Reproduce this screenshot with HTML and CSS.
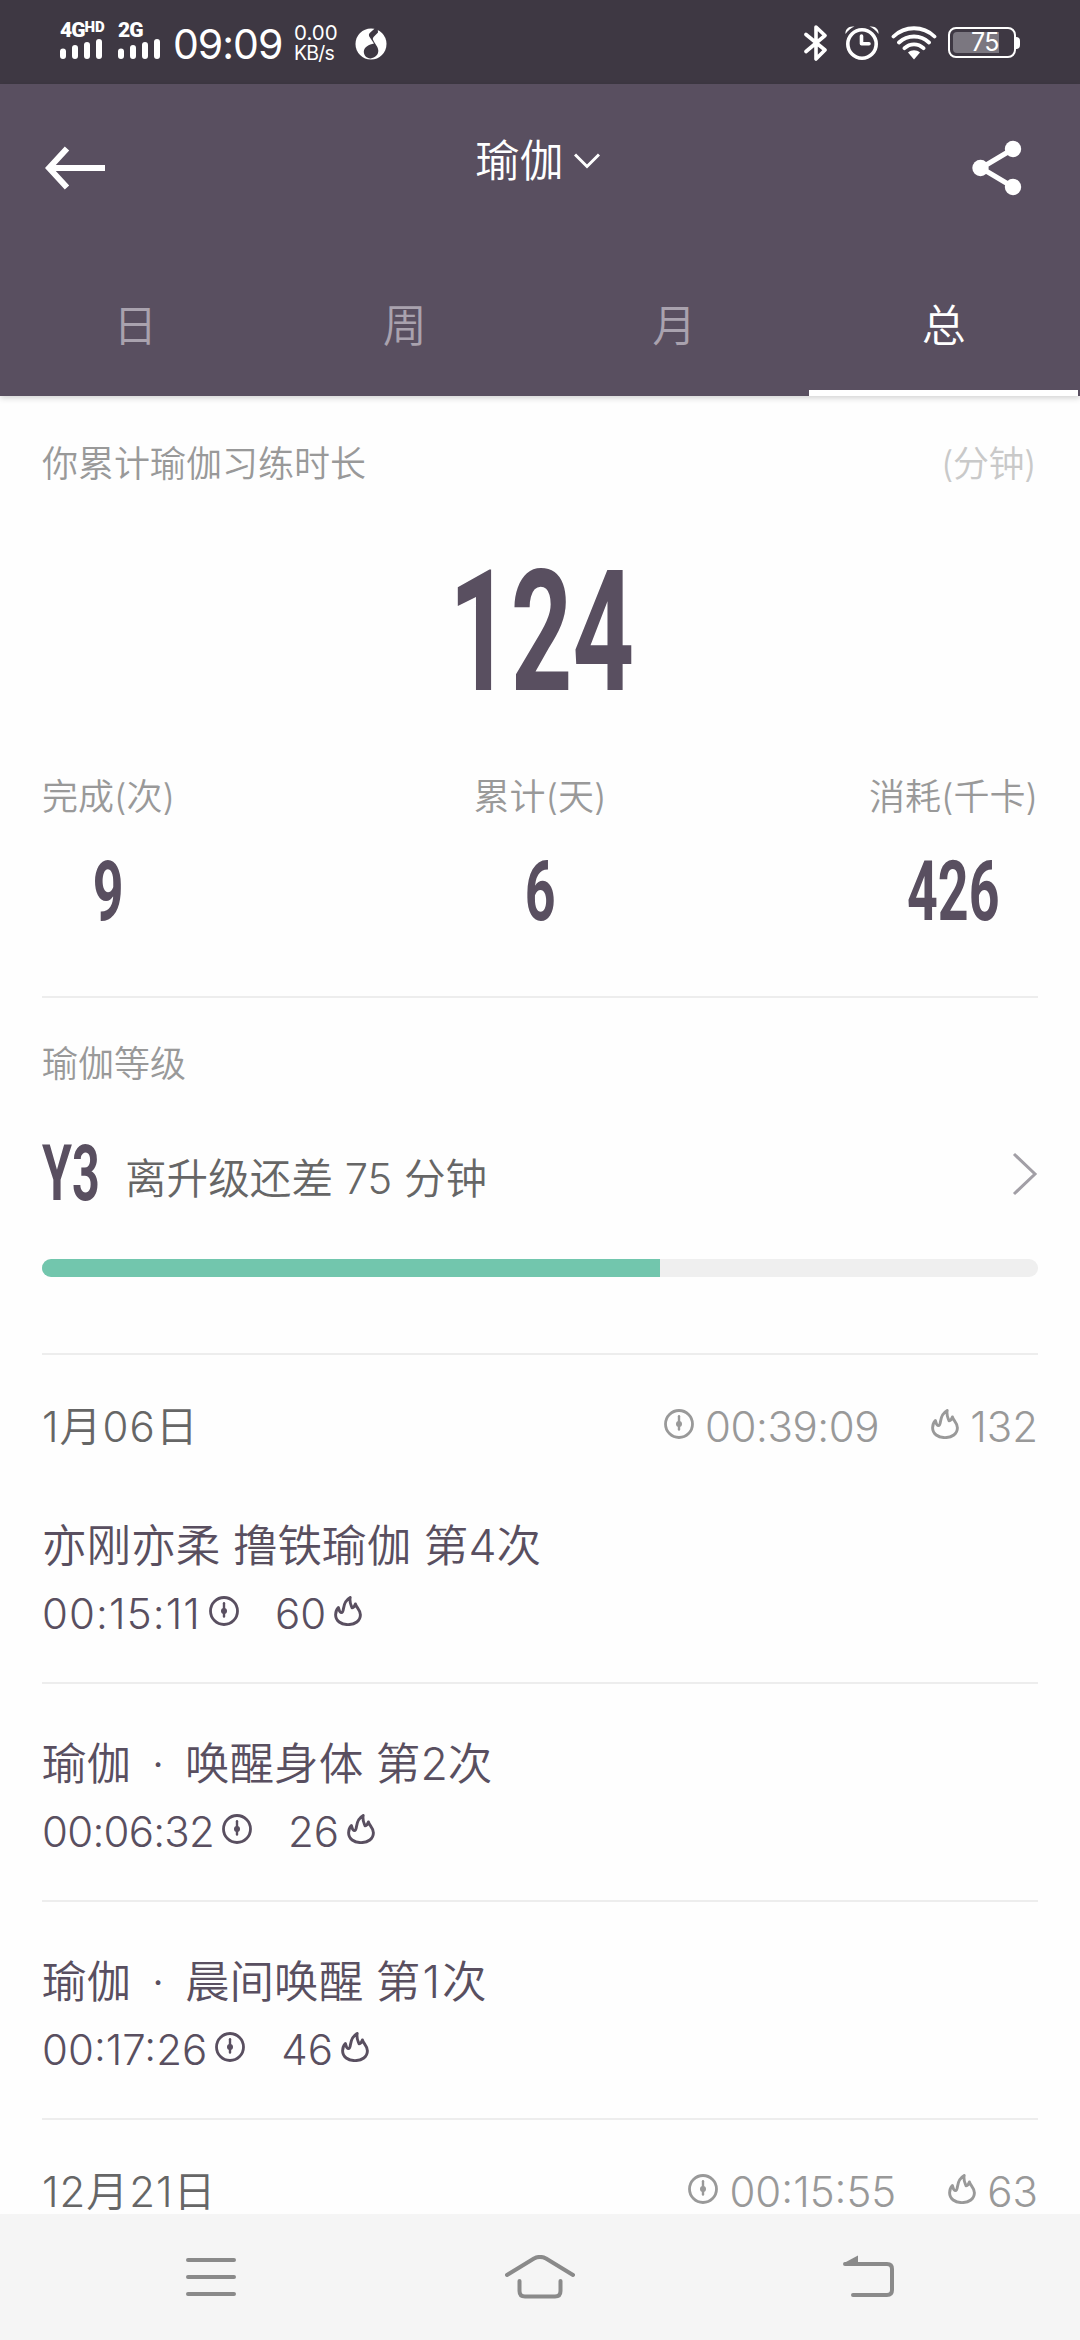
FILE: index.html
```html
<!DOCTYPE html>
<html lang="zh-CN">
<head>
<meta charset="utf-8">
<title>瑜伽</title>
<link rel="stylesheet" href="styles.css">
</head>
<body>
<svg class="defs" width="0" height="0">
  <symbol id="clock" viewBox="0 0 30 30"><circle cx="15" cy="15" r="13.500" fill="none" stroke="currentColor" stroke-width="2.800"/><path d="M15 7.200V20.500" fill="none" stroke="currentColor" stroke-width="2.400" stroke-linecap="round"/><circle cx="15" cy="15" r="3" fill="currentColor"/></symbol>
  <symbol id="flame" viewBox="0 0 28 30"><path d="M4.400 11.500C5.200 13.800 5.200 16.600 7.400 16.600C11.200 16.400 6.800 6.600 16.200 1.500C15.200 6 16.800 8.600 18 11.800C19.800 11.400 20.800 10 21.400 8C22.400 11.600 26.400 13.600 26.400 18.800C26.400 25 21 28.600 14 28.600C7 28.600 1.600 25 1.600 18.800C1.600 16 2.600 13.400 4.400 11.500Z" fill="none" stroke="currentColor" stroke-width="2.900" stroke-linejoin="round"/></symbol>
</svg>
<div class="statusbar">
  <div class="sim"><div class="net">4G<sup>HD</sup></div><svg width="44" height="20" viewBox="0 0 44 20"><path d="M3 12.500V17M15 9V17M27 6V17M39 3V17" class="bars"/></svg></div>
  <div class="sim"><div class="net">2G</div><svg width="44" height="20" viewBox="0 0 44 20"><path d="M3 12.500V17M15 9V17M27 6V17M39 3V17" class="bars"/></svg></div>
  <div class="time">09:09</div>
  <div class="speed"><span>0.00</span><span class="kb">KB/s</span></div>
  <svg class="app" width="32" height="34" viewBox="0 0 32 34"><circle cx="16" cy="18" r="15.500" fill="#fff"/><path d="M22.500 0L15 6.800C13.600 8.200 13.600 9.600 14.600 11L19 17.600C14 18.600 9 21 8.800 25.600C8.800 30 12 32.600 15.600 32.400C20 32 23.600 28.800 23.300 24.600C23.200 21 20.400 18.600 18.400 14.600C17.600 13 17.600 12 18.800 10.800L23 6.400Z" fill="#3e3843"/></svg>
  <div class="sysicons">
    <svg class="bt" width="24" height="36" viewBox="0 0 24 36"><path d="M2 9.500L21 25L12 34V2L21 10.500L2 26.500" fill="none" stroke="#fff" stroke-width="3.600" stroke-linejoin="round" stroke-linecap="round"/></svg>
    <svg width="34" height="36" viewBox="0 0 34 36"><circle cx="17" cy="19" r="14.200" fill="none" stroke="#fff" stroke-width="3.600"/><path d="M16.500 11V18.800H24" fill="none" stroke="#fff" stroke-width="3.600" stroke-linecap="round" stroke-linejoin="round"/><path d="M.5 9C0 4 4 .5 9.500 1.600C6 3 3 5.500 .5 9ZM33.500 9C34 4 30 .5 24.500 1.600C28 3 31 5.500 33.500 9Z" fill="#fff"/></svg>
    <svg class="wifi" width="46" height="36" viewBox="0 0 46 36"><path d="M2.500 11.500C14 .5 32 .5 43.500 11.500M8 17.500C16.500 9.500 29.500 9.500 38 17.500M13.500 23.200C19 18 27 18 32.500 23.200" fill="none" stroke="#fff" stroke-width="3.800" stroke-linecap="round"/><path d="M17 27.500C20.500 24.500 25.500 24.500 29 27.500L23 34.500Z" fill="#fff"/></svg>
    <div class="battery"><div class="level">75</div></div>
  </div>
</div>
<header class="header">
  <div class="titlebar">
    <svg width="60" height="44" viewBox="0 0 60 44"><path d="M60 22H5M22 2.500L4 22L22 41.500" fill="none" stroke="#fff" stroke-width="6"/></svg>
    <div class="title">瑜伽<svg width="26" height="16" viewBox="0 0 26 16"><path d="M1 1.500L13 13.500L25 1.500" fill="none" stroke="#fff" stroke-width="3"/></svg></div>
    <svg width="50" height="56" viewBox="0 0 50 56"><path d="M41 9L9 28L41 47" fill="none" stroke="#fff" stroke-width="5"/><g fill="#fff"><circle cx="41" cy="9" r="8.200"/><circle cx="8.500" cy="28" r="8.200"/><circle cx="41" cy="47" r="8.200"/></g></svg>
  </div>
  <nav class="tabs"><div>日</div><div>周</div><div>月</div><div class="on">总</div></nav>
</header>
<main class="content">
  <section class="total">
    <div class="cap"><span>你累计瑜伽习练时长</span><span class="unit">(分钟)</span></div>
    <div class="big"><span>124</span></div>
    <div class="stats">
      <div><span>完成(次)</span><b>9</b></div>
      <div><span>累计(天)</span><b>6</b></div>
      <div><span>消耗(千卡)</span><b>426</b></div>
    </div>
  </section>
  <section class="level-box">
    <div class="cap">瑜伽等级</div>
    <div class="rank"><b>Y3</b><span>离升级还差 75 分钟</span><svg width="26" height="44" viewBox="0 0 26 44"><path d="M2 2L23 22L2 42" fill="none" stroke="#a29fa6" stroke-width="3"/></svg></div>
    <div class="progress"><div style="width:62.050%"></div></div>
  </section>
  <section class="day">
    <div class="dayhead"><span>1月06日</span><div><svg width="30" height="30"><use href="#clock"/></svg><i class="t snug">00:39:09</i><svg width="28" height="30"><use href="#flame"/></svg><i>132</i></div></div>
    <article><h3>亦刚亦柔 撸铁瑜伽 第4次</h3><p><i class="loose">00:15:11</i><svg width="30" height="30"><use href="#clock"/></svg><i class="kcal">60</i><svg width="28" height="30"><use href="#flame"/></svg></p></article>
    <article><h3>瑜伽<i class="dot"> · </i>唤醒身体 第2次</h3><p><i class="tight">00:06:32</i><svg width="30" height="30"><use href="#clock"/></svg><i class="kcal">26</i><svg width="28" height="30"><use href="#flame"/></svg></p></article>
    <article><h3>瑜伽<i class="dot"> · </i>晨间唤醒 第<i class="one">1</i>次</h3><p><i>00:17:26</i><svg width="30" height="30"><use href="#clock"/></svg><i class="kcal">46</i><svg width="28" height="30"><use href="#flame"/></svg></p></article>
  </section>
  <section class="day">
    <div class="dayhead"><span>12月21日</span><div><svg width="30" height="30"><use href="#clock"/></svg><i class="t">00:15:55</i><svg width="28" height="30"><use href="#flame"/></svg><i>63</i></div></div>
  </section>
</main>
<footer class="sysnav">
  <svg width="50" height="44" viewBox="0 0 50 44"><path d="M2 5H48M2 22H48M2 39H48"/></svg>
  <svg width="70" height="44" viewBox="0 0 70 44"><path d="M2 20L29 3.500Q35 .3 41 3.500L68 20M14.500 26V36Q14.500 41.500 20 41.500H50Q55.500 41.500 55.500 36V26"/></svg>
  <svg width="52" height="44" viewBox="0 0 52 44"><path d="M2 9H44Q49 9 49 14V35Q49 40 44 40H10"/><path d="M1 8L15 .5V10H2Z" class="tip"/></svg>
</footer>
</body>
</html>
```
FILE: styles.css
```css
* { box-sizing: border-box; margin: 0; padding: 0; }
body {
  width: 1080px; height: 2340px; overflow: hidden;
  display: flex; flex-direction: column;
  background: #fefefe; color: #594f60;
  font-family: Inter, "Noto Sans CJK SC", sans-serif; font-weight: 350;
}
.defs { position: absolute; }
svg { display: block; flex: none; }
i { font-style: normal; }

.statusbar { height: 84px; flex: none; background: #3e3843; color: #fff; display: flex; align-items: flex-start; padding: 0 60px; }
.sim { width: 58px; padding-top: 21px; }
.net { height: 18px; font: 900 21px/18px Roboto, sans-serif; letter-spacing: -1px; white-space: nowrap; display: flex; }
.net sup { font-size: 15px; line-height: 12px; letter-spacing: 0; }
.bars { stroke: #fff; stroke-width: 6; stroke-linecap: round; fill: none; }
.time { margin: 19px 3px 0 -3px; width: 118px; font-size: 41px; line-height: 50px; font-weight: 400; letter-spacing: -1px; }
.speed { width: 61px; margin-top: 23px; font-size: 20.500px; line-height: 20px; font-weight: 400; display: flex; flex-direction: column; }
.kb { font-size: 19.500px; letter-spacing: -.8px; }
.app { margin-top: 26px; }
.sysicons { margin-left: auto; margin-top: 25px; display: flex; align-items: flex-start; }
.sysicons svg { margin-right: 12px; }
.sysicons .bt { margin-right: 17px; }
.sysicons .wifi { margin-right: 11px; }
.battery { width: 68px; height: 31px; margin: 2px 4px 0 0; border: 2px solid #fff; border-radius: 8px; padding: 3px; position: relative; }
.battery::after { content: ""; position: absolute; right: -6px; top: 8px; width: 4px; height: 12px; background: #fff; border-radius: 0 4px 4px 0; }
.level { width: 46px; height: 21px; background: #7b7780; border-radius: 4px 0 0 4px; font: 400 25px/21px Inter, sans-serif; letter-spacing: -.5px; text-align: right; }

.header { height: 312px; flex: none; background: #594f60; color: #fff; display: flex; flex-direction: column; justify-content: space-between; box-shadow: 0 2px 6px rgba(0,0,0,.18); z-index: 1; }
.titlebar { height: 168px; padding: 0 58px 0 45px; display: flex; justify-content: space-between; align-items: center; }
.title { display: flex; align-items: center; font-size: 44px; line-height: 60px; gap: 10px; padding-bottom: 14px; margin-left: -2px; }
.tabs { display: grid; grid-template-columns: repeat(4, 269.500px); font-size: 44px; line-height: 60px; text-align: center; height: 100px; }
.tabs div { color: #a9a2ae; height: 100px; padding-left: 1px; }
.tabs .on { color: #fff; border-bottom: 6px solid #fff; }

.content { flex: 1; min-height: 0; overflow: hidden; padding: 0 42px; }
.total { height: 602px; border-bottom: 2px solid #ededed; padding-top: 44px; }
.cap { display: flex; justify-content: space-between; font-size: 36px; line-height: 48px; color: #999; }
.unit { color: #c9c9c9; padding-right: 2px; letter-spacing: -.5px; }
.big { height: 168px; margin-top: 61px; padding-left: 4px; display: flex; justify-content: center; font: 700 168px/168px Roboto, sans-serif; }
.big span { transform: scaleX(.64); }
.stats { display: grid; grid-template-columns: 1fr 1fr 1fr; margin-top: 56px; }
.stats div { display: flex; flex-direction: column; align-items: center; }
.stats div:first-child { justify-self: start; }
.stats div:last-child { justify-self: end; }
.stats span { font-size: 36px; line-height: 48px; color: #999; }
.stats b { font: 700 84px/84px Roboto, sans-serif; transform: scaleX(.64); margin-top: 29px; }
.level-box { height: 357px; border-bottom: 2px solid #ededed; padding-top: 42px; }
.rank { display: flex; align-items: center; height: 96px; margin-top: 38px; }
.rank b { width: 83px; font: 700 78px/96px Roboto, sans-serif; transform: scaleX(.62); transform-origin: left; }
.rank span { font-size: 41.600px; line-height: 60px; color: #666; margin-top: 10px; }
.rank svg { margin-left: auto; }
.progress { margin-top: 37px; height: 18px; border-radius: 9px; background: #efefef; overflow: hidden; }
.progress div { height: 18px; background: #72c6ad; }

.dayhead { height: 146px; padding-top: 50px; display: flex; justify-content: space-between; font-size: 42px; line-height: 44px; color: #666; }
.dayhead span { letter-spacing: 1px; }
.dayhead div { display: flex; color: #999; font-weight: 300; }
.dayhead svg { margin: 4px 11px 0 0; }
.dayhead .t { margin-right: 52px; }
.snug { letter-spacing: -.4px; }
.loose { letter-spacing: 1.100px; }
.tight { letter-spacing: -.75px; }
article { height: 218px; border-bottom: 2px solid #ededed; padding-top: 50px; }
article:nth-of-type(1) { height: 183px; padding-top: 15px; }
article h3 { font-weight: 350; font-size: 44.600px; line-height: 60px; }
article p { display: flex; font-size: 42px; line-height: 60px; margin-top: 8px; font-weight: 300; }
article svg { margin: 12px 0 0 8px; }
.kcal { margin-left: 36px; }
.dot { margin: 0 8px; white-space: pre; }
.one { margin: 0 2px; }

.sysnav { height: 126px; flex: none; background: #f5f5f5; display: flex; justify-content: space-between; padding: 41px 185px 0 186px; }
.sysnav path { fill: none; stroke: #8a8a8a; stroke-width: 4; stroke-linecap: round; stroke-linejoin: round; }
.sysnav .tip { fill: #8a8a8a; stroke: none; }
```
